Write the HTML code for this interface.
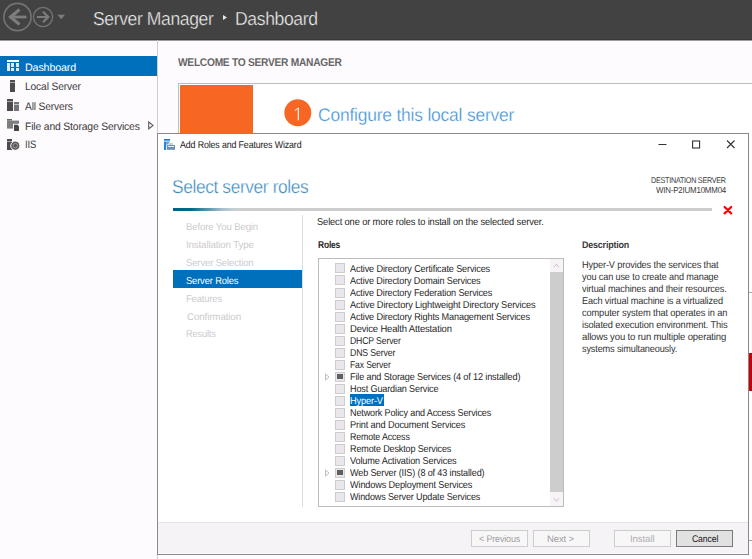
<!DOCTYPE html>
<html><head><meta charset="utf-8">
<style>
*{margin:0;padding:0;box-sizing:border-box}
html,body{width:752px;height:559px;overflow:hidden;background:#fefbfe;font-family:"Liberation Sans",sans-serif;position:relative}
.a{position:absolute}
.t{position:absolute;white-space:nowrap}
.cb{position:absolute;left:335px;width:10px;height:10px;background:#e9e7e9;border:1px solid #cfcccf}
.btn{position:absolute;top:530px;height:17px;border:1px solid #cfcccf;background:#f8f7f8}
</style></head><body>
<div class="a" style="left:0;top:0;width:752px;height:40px;background:#424242"></div>
<div class="a" style="left:0;top:39px;width:752px;height:1px;background:#383838"></div>
<div class="a" style="left:0;top:40px;width:752px;height:1px;background:#9c9b9c"></div>
<svg class="a" style="left:0;top:0" width="80" height="40">
  <circle cx="17.5" cy="17" r="13.6" fill="none" stroke="#747474" stroke-width="1.6"/>
  <path d="M10 17 H26.5" fill="none" stroke="#7c7c7c" stroke-width="2.8"/>
  <path d="M19.5 9.6 L10.6 17 L19.5 24.4" fill="none" stroke="#7c7c7c" stroke-width="3.2"/>
  <circle cx="43" cy="17" r="9.6" fill="none" stroke="#747474" stroke-width="1.4"/>
  <path d="M36.8 17 H48" fill="none" stroke="#7c7c7c" stroke-width="2"/>
  <path d="M43 11.8 L48.3 17 L43 22.2" fill="none" stroke="#7c7c7c" stroke-width="2.2"/>
  <path d="M57.5 14.8 H65 L61.25 19.2 Z" fill="#7c7c7c"/>
</svg>
<svg class="a" style="left:222px;top:14px" width="6" height="7"><path d="M1 1 L5 3.5 L1 6 Z" fill="#e8e8e8"/></svg>

<!-- sidebar -->
<div class="a" style="left:157px;top:40px;width:1px;height:519px;background:#d0cdd0"></div>
<div class="a" style="left:0;top:56px;width:157px;height:20px;background:#0070bd"></div>
<svg class="a" style="left:0;top:56px" width="24" height="100">
  <rect x="7" y="4" width="12" height="2" fill="#fff"/>
  <rect x="7" y="7" width="3" height="8" fill="#dfeaf6"/>
  <rect x="11" y="7" width="3" height="4" fill="#dfeaf6"/><rect x="16" y="7" width="3" height="4" fill="#dfeaf6"/>
  <rect x="11" y="12" width="3" height="3" fill="#dfeaf6"/><rect x="16" y="12" width="3" height="3" fill="#dfeaf6"/>
  <rect x="10" y="24" width="5" height="12" fill="#4c4c4c"/><rect x="10" y="26" width="5" height="1" fill="#a8a8a8"/>
  <rect x="7" y="43" width="6" height="12" fill="#4c4c4c"/><rect x="7" y="45" width="6" height="1" fill="#a8a8a8"/>
  <rect x="14" y="46" width="5" height="9" fill="#747474"/><rect x="14" y="48" width="5" height="1" fill="#bdbdbd"/>
  <rect x="7" y="63" width="5" height="1.6" fill="#666"/>
  <rect x="7" y="64.6" width="12" height="8" fill="#7e7e7e"/>
  <rect x="13" y="67.8" width="7" height="8" fill="#fefbfe"/>
  <path d="M14 68.8 H17.6 L19 70.2 V75 H14 Z" fill="#454545"/>
  <rect x="7" y="83" width="5" height="11" fill="#4c4c4c"/><rect x="7" y="85" width="5" height="1" fill="#a8a8a8"/>
  <circle cx="15.3" cy="89.7" r="4.6" fill="#5a5a5a" stroke="#fefbfe" stroke-width="1"/>
  <circle cx="15.3" cy="89.7" r="2.3" fill="none" stroke="#9a9a9a" stroke-width="1"/>
</svg>
<svg class="a" style="left:147px;top:120px" width="8" height="10"><path d="M1.7 2 L6 5.4 L1.7 8.8 Z" fill="none" stroke="#5a5a5a" stroke-width="1.1"/></svg>

<!-- main welcome -->
<div class="a" style="left:178px;top:83px;width:600px;height:500px;background:#fff;border:1px solid #bdbdbd"></div>
<div class="a" style="left:180px;top:85px;width:73px;height:60px;background:#f76622"></div>
<svg class="a" style="left:280px;top:95px" width="36" height="36"><circle cx="17.8" cy="17.7" r="13.5" fill="#f76622"/></svg>
<svg class="a" style="left:290px;top:104px" width="14" height="20"><path d="M8.3 3.8 V16.3" stroke="#fff" stroke-width="1.1"/><path d="M4.8 6.6 L8.3 4" stroke="#fff" stroke-width="1"/></svg>
<div class="a" style="left:749px;top:292px;width:3px;height:1px;background:#a6a6a6"></div>
<div class="a" style="left:749px;top:293px;width:3px;height:60px;background:#fefbfe"></div>
<div class="a" style="left:749px;top:391px;width:3px;height:149px;background:#fff"></div>
<div class="a" style="left:749px;top:353px;width:3px;height:38px;background:#c8000a"></div>
<div class="a" style="left:749px;top:540px;width:3px;height:1px;background:#a0a0a0"></div>
<div class="a" style="left:749px;top:541px;width:3px;height:18px;background:#fefbfe"></div>
<div class="a" style="left:158px;top:555px;width:591px;height:4px;background:#fefcfe"></div>

<!-- dialog -->
<div class="a" style="left:157px;top:133px;width:592px;height:422px;background:#fff;border:1px solid #8a8a8a"></div>
<svg class="a" style="left:160px;top:135px" width="20" height="20">
  <rect x="4" y="4" width="6" height="1.7" fill="#1b7ad6"/>
  <rect x="4" y="6.6" width="2.2" height="8.4" fill="#2384e0"/>
  <path d="M6.2 6.6 H10 L8 9.5 H6.2 Z" fill="#5aa2e6"/>
  <path d="M8.7 8 H13 V10 H8.7 Z" fill="#c8d2dc"/>
  <rect x="7" y="10" width="8" height="4.8" fill="#6f90b0"/>
  <rect x="8" y="11" width="6" height="1" fill="#e8eef4"/>
</svg>
<svg class="a" style="left:655px;top:136px" width="85" height="18">
  <path d="M3.5 8.5 H11.5" stroke="#333" stroke-width="1"/>
  <rect x="37.6" y="5" width="7" height="7" fill="none" stroke="#333" stroke-width="1.1"/>
  <path d="M72 4.5 L79.5 12 M79.5 4.5 L72 12" stroke="#333" stroke-width="1.1"/>
</svg>
<div class="a" style="left:173px;top:208px;width:539px;height:3px;background:linear-gradient(to right,#036089 0px,#046690 18px,#5f9ab1 36px,#a9c2cc 50px,#c8d0d3 62px,#cdcdcd 72px,#cdcdcd 100%)"></div>
<svg class="a" style="left:722px;top:205px" width="12" height="11"><path d="M2.6 2 L9.2 8.4 M9.2 2 L2.6 8.4" stroke="#ff0000" stroke-width="2.2" stroke-linecap="round"/></svg>

<div class="a" style="left:302px;top:215px;width:1px;height:292px;background:#dcdcdc"></div>
<div class="a" style="left:173px;top:270px;width:129px;height:18px;background:#0070bd"></div>

<!-- listbox -->
<div class="a" style="left:318px;top:258px;width:246px;height:249px;border:1px solid #bcbcbc;background:#fff"></div>
<div class="a" style="left:550px;top:259px;width:13px;height:247px;background:#f7f3f7"></div>
<div class="a" style="left:550px;top:272px;width:13px;height:220px;background:#cdcdcd"></div>
<svg class="a" style="left:550px;top:259px" width="13" height="247">
  <path d="M4 8.3 L6.5 5.2 L9 8.3" fill="none" stroke="#c4c4c4" stroke-width="1"/>
  <path d="M4 239.2 L6.5 242.3 L9 239.2" fill="none" stroke="#c4c4c4" stroke-width="1"/>
</svg>
<div class="cb" style="top:263.40px"></div>
<div class="cb" style="top:275.45px"></div>
<div class="cb" style="top:287.50px"></div>
<div class="cb" style="top:299.55px"></div>
<div class="cb" style="top:311.60px"></div>
<div class="cb" style="top:323.65px"></div>
<div class="cb" style="top:335.70px"></div>
<div class="cb" style="top:347.75px"></div>
<div class="cb" style="top:359.80px"></div>
<div class="cb" style="top:371.85px"></div>
<div class="a" style="left:337px;top:373.85px;width:6px;height:5px;background:#5f5f5f"></div>
<svg class="a" style="left:324px;top:372.85px" width="7" height="8"><path d="M1.5 1 L5 4 L1.5 7 Z" fill="none" stroke="#bdbdbd" stroke-width="1"/></svg>
<div class="cb" style="top:383.90px"></div>
<div class="cb" style="top:395.95px"></div>
<div class="a" style="left:350px;top:394.4px;width:34px;height:12px;background:#0070bd"></div>
<div class="cb" style="top:408.00px"></div>
<div class="cb" style="top:420.05px"></div>
<div class="cb" style="top:432.10px"></div>
<div class="cb" style="top:444.15px"></div>
<div class="cb" style="top:456.20px"></div>
<div class="cb" style="top:468.25px"></div>
<div class="a" style="left:337px;top:470.25px;width:6px;height:5px;background:#5f5f5f"></div>
<svg class="a" style="left:324px;top:469.25px" width="7" height="8"><path d="M1.5 1 L5 4 L1.5 7 Z" fill="none" stroke="#bdbdbd" stroke-width="1"/></svg>
<div class="cb" style="top:480.30px"></div>
<div class="cb" style="top:492.35px"></div>

<!-- footer -->
<div class="a" style="left:158px;top:522px;width:590px;height:32px;background:#f6f3f6;border-top:1px solid #e6e3e6;border-bottom:1px solid #fdfbfd"></div>
<div class="btn" style="left:471px;width:57px"></div>
<div class="btn" style="left:533px;width:57px"></div>
<div class="btn" style="left:614px;width:57px"></div>
<div class="btn" style="left:676px;width:57px;background:#e1e1e1;border-color:#7a7a7a"></div>
<div class="t" style="left:92.5px;top:10px;font-size:18.8px;line-height:18.8px;letter-spacing:-0.4px;color:#f4f4f4;text-rendering:geometricPrecision;-webkit-text-stroke:0.35px #424242;transform:scaleX(0.9326);transform-origin:0 0">Server Manager</div>
<div class="t" style="left:235.2px;top:10px;font-size:18.8px;line-height:18.8px;letter-spacing:-0.4px;color:#f4f4f4;text-rendering:geometricPrecision;-webkit-text-stroke:0.35px #424242;transform:scaleX(0.9356);transform-origin:0 0">Dashboard</div>
<div class="t" style="left:24.9px;top:63px;font-size:10.8px;line-height:10.8px;letter-spacing:-0.15px;color:#ffffff;text-rendering:geometricPrecision;transform:scaleX(0.992);transform-origin:0 0">Dashboard</div>
<div class="t" style="left:24.9px;top:82px;font-size:10.8px;line-height:10.8px;letter-spacing:-0.15px;color:#3a3a3a;text-rendering:geometricPrecision;transform:scaleX(0.9483);transform-origin:0 0">Local Server</div>
<div class="t" style="left:24.9px;top:102px;font-size:10.8px;line-height:10.8px;letter-spacing:-0.15px;color:#3a3a3a;text-rendering:geometricPrecision;transform:scaleX(0.946);transform-origin:0 0">All Servers</div>
<div class="t" style="left:24.9px;top:122px;font-size:10.8px;line-height:10.8px;letter-spacing:-0.15px;color:#3a3a3a;text-rendering:geometricPrecision;transform:scaleX(0.9571);transform-origin:0 0">File and Storage Services</div>
<div class="t" style="left:24.8px;top:140px;font-size:10.8px;line-height:10.8px;letter-spacing:-0.15px;color:#3a3a3a;text-rendering:geometricPrecision;transform:scaleX(0.8667);transform-origin:0 0">IIS</div>
<div class="t" style="left:178.4px;top:58px;font-size:11.2px;line-height:11.2px;letter-spacing:-0.3px;font-weight:bold;color:#666666;text-rendering:geometricPrecision;transform:scaleX(0.9128);transform-origin:0 0">WELCOME TO SERVER MANAGER</div>
<div class="t" style="left:318.4px;top:106px;font-size:18.2px;line-height:18.2px;letter-spacing:-0.2px;color:#3d90d4;text-rendering:geometricPrecision;-webkit-text-stroke:0.3px #ffffff;transform:scaleX(0.9576);transform-origin:0 0">Configure this local server</div>
<div class="t" style="left:180px;top:141px;font-size:10px;line-height:10px;letter-spacing:-0.15px;color:#1a1a1a;text-rendering:geometricPrecision;transform:scaleX(0.8839);transform-origin:0 0">Add Roles and Features Wizard</div>
<div class="t" style="left:171.5px;top:178px;font-size:18.6px;line-height:18.6px;letter-spacing:-0.4px;color:#3d8bbd;text-rendering:geometricPrecision;-webkit-text-stroke:0.3px #ffffff;transform:scaleX(0.9317);transform-origin:0 0">Select server roles</div>
<div class="t" style="left:650.9px;top:176px;font-size:8.3px;line-height:8.3px;letter-spacing:-0.3px;color:#3a3a3a;text-rendering:geometricPrecision;transform:scaleX(0.8694);transform-origin:0 0">DESTINATION SERVER</div>
<div class="t" style="left:656px;top:186px;font-size:8.6px;line-height:8.6px;letter-spacing:-0.2px;color:#3a3a3a;text-rendering:geometricPrecision;transform:scaleX(0.9184);transform-origin:0 0">WIN-P2IUM10MM04</div>
<div class="t" style="left:186.3px;top:223px;font-size:10px;line-height:10px;letter-spacing:-0.15px;color:#cdcacd;text-rendering:geometricPrecision;transform:scaleX(0.9622);transform-origin:0 0">Before You Begin</div>
<div class="t" style="left:186.3px;top:241px;font-size:10px;line-height:10px;letter-spacing:-0.15px;color:#cdcacd;text-rendering:geometricPrecision;transform:scaleX(0.9735);transform-origin:0 0">Installation Type</div>
<div class="t" style="left:186.3px;top:259px;font-size:10px;line-height:10px;letter-spacing:-0.15px;color:#cdcacd;text-rendering:geometricPrecision;transform:scaleX(0.9514);transform-origin:0 0">Server Selection</div>
<div class="t" style="left:186.3px;top:277px;font-size:10px;line-height:10px;letter-spacing:-0.15px;color:#ffffff;text-rendering:geometricPrecision;transform:scaleX(0.9345);transform-origin:0 0">Server Roles</div>
<div class="t" style="left:186.3px;top:295px;font-size:10px;line-height:10px;letter-spacing:-0.15px;color:#cdcacd;text-rendering:geometricPrecision;transform:scaleX(0.9405);transform-origin:0 0">Features</div>
<div class="t" style="left:187.3px;top:313px;font-size:10px;line-height:10px;letter-spacing:-0.15px;color:#cdcacd;text-rendering:geometricPrecision;transform:scaleX(0.9836);transform-origin:0 0">Confirmation</div>
<div class="t" style="left:186.3px;top:330px;font-size:10px;line-height:10px;letter-spacing:-0.15px;color:#cdcacd;text-rendering:geometricPrecision;transform:scaleX(0.9194);transform-origin:0 0">Results</div>
<div class="t" style="left:317.2px;top:218px;font-size:10px;line-height:10px;letter-spacing:-0.15px;color:#262626;text-rendering:geometricPrecision;transform:scaleX(0.9328);transform-origin:0 0">Select one or more roles to install on the selected server.</div>
<div class="t" style="left:317.8px;top:241px;font-size:10px;line-height:10px;letter-spacing:-0.2px;font-weight:bold;color:#262626;text-rendering:geometricPrecision;transform:scaleX(0.844);transform-origin:0 0">Roles</div>
<div class="t" style="left:349.8px;top:265px;font-size:10px;line-height:10px;letter-spacing:-0.15px;color:#262626;text-rendering:geometricPrecision;transform:scaleX(0.9131);transform-origin:0 0">Active Directory Certificate Services</div>
<div class="t" style="left:349.8px;top:277px;font-size:10px;line-height:10px;letter-spacing:-0.15px;color:#262626;text-rendering:geometricPrecision;transform:scaleX(0.909);transform-origin:0 0">Active Directory Domain Services</div>
<div class="t" style="left:349.8px;top:289px;font-size:10px;line-height:10px;letter-spacing:-0.15px;color:#262626;text-rendering:geometricPrecision;transform:scaleX(0.9096);transform-origin:0 0">Active Directory Federation Services</div>
<div class="t" style="left:349.8px;top:301px;font-size:10px;line-height:10px;letter-spacing:-0.15px;color:#262626;text-rendering:geometricPrecision;transform:scaleX(0.9265);transform-origin:0 0">Active Directory Lightweight Directory Services</div>
<div class="t" style="left:349.8px;top:313px;font-size:10px;line-height:10px;letter-spacing:-0.15px;color:#262626;text-rendering:geometricPrecision;transform:scaleX(0.9132);transform-origin:0 0">Active Directory Rights Management Services</div>
<div class="t" style="left:349.8px;top:325px;font-size:10px;line-height:10px;letter-spacing:-0.15px;color:#262626;text-rendering:geometricPrecision;transform:scaleX(0.943);transform-origin:0 0">Device Health Attestation</div>
<div class="t" style="left:349.8px;top:337px;font-size:10px;line-height:10px;letter-spacing:-0.15px;color:#262626;text-rendering:geometricPrecision;transform:scaleX(0.8638);transform-origin:0 0">DHCP Server</div>
<div class="t" style="left:349.8px;top:349px;font-size:10px;line-height:10px;letter-spacing:-0.15px;color:#262626;text-rendering:geometricPrecision;transform:scaleX(0.8725);transform-origin:0 0">DNS Server</div>
<div class="t" style="left:349.8px;top:361px;font-size:10px;line-height:10px;letter-spacing:-0.15px;color:#262626;text-rendering:geometricPrecision;transform:scaleX(0.8565);transform-origin:0 0">Fax Server</div>
<div class="t" style="left:349.8px;top:373px;font-size:10px;line-height:10px;letter-spacing:-0.15px;color:#262626;text-rendering:geometricPrecision;transform:scaleX(0.9097);transform-origin:0 0">File and Storage Services (4 of 12 installed)</div>
<div class="t" style="left:349.8px;top:385px;font-size:10px;line-height:10px;letter-spacing:-0.15px;color:#262626;text-rendering:geometricPrecision;transform:scaleX(0.9073);transform-origin:0 0">Host Guardian Service</div>
<div class="t" style="left:349.8px;top:397px;font-size:10px;line-height:10px;letter-spacing:-0.15px;color:#ffffff;text-rendering:geometricPrecision;transform:scaleX(0.9229);transform-origin:0 0">Hyper-V</div>
<div class="t" style="left:349.8px;top:409px;font-size:10px;line-height:10px;letter-spacing:-0.15px;color:#262626;text-rendering:geometricPrecision;transform:scaleX(0.9039);transform-origin:0 0">Network Policy and Access Services</div>
<div class="t" style="left:349.8px;top:421px;font-size:10px;line-height:10px;letter-spacing:-0.15px;color:#262626;text-rendering:geometricPrecision;transform:scaleX(0.9185);transform-origin:0 0">Print and Document Services</div>
<div class="t" style="left:349.8px;top:433px;font-size:10px;line-height:10px;letter-spacing:-0.15px;color:#262626;text-rendering:geometricPrecision;transform:scaleX(0.8836);transform-origin:0 0">Remote Access</div>
<div class="t" style="left:349.8px;top:445px;font-size:10px;line-height:10px;letter-spacing:-0.15px;color:#262626;text-rendering:geometricPrecision;transform:scaleX(0.9018);transform-origin:0 0">Remote Desktop Services</div>
<div class="t" style="left:349.8px;top:457px;font-size:10px;line-height:10px;letter-spacing:-0.15px;color:#262626;text-rendering:geometricPrecision;transform:scaleX(0.9172);transform-origin:0 0">Volume Activation Services</div>
<div class="t" style="left:349.8px;top:469px;font-size:10px;line-height:10px;letter-spacing:-0.15px;color:#262626;text-rendering:geometricPrecision;transform:scaleX(0.9061);transform-origin:0 0">Web Server (IIS) (8 of 43 installed)</div>
<div class="t" style="left:349.8px;top:481px;font-size:10px;line-height:10px;letter-spacing:-0.15px;color:#262626;text-rendering:geometricPrecision;transform:scaleX(0.9134);transform-origin:0 0">Windows Deployment Services</div>
<div class="t" style="left:349.8px;top:493px;font-size:10px;line-height:10px;letter-spacing:-0.15px;color:#262626;text-rendering:geometricPrecision;transform:scaleX(0.9014);transform-origin:0 0">Windows Server Update Services</div>
<div class="t" style="left:581.9px;top:241px;font-size:9.6px;line-height:9.6px;letter-spacing:-0.2px;font-weight:bold;color:#3a3a3a;text-rendering:geometricPrecision;transform:scaleX(0.9306);transform-origin:0 0">Description</div>
<div class="t" style="left:581.9px;top:261px;font-size:10px;line-height:10px;letter-spacing:-0.15px;color:#333333;text-rendering:geometricPrecision;transform:scaleX(0.9231);transform-origin:0 0">Hyper-V provides the services that</div>
<div class="t" style="left:581.9px;top:273px;font-size:10px;line-height:10px;letter-spacing:-0.15px;color:#333333;text-rendering:geometricPrecision;transform:scaleX(0.9148);transform-origin:0 0">you can use to create and manage</div>
<div class="t" style="left:581.9px;top:285px;font-size:10px;line-height:10px;letter-spacing:-0.15px;color:#333333;text-rendering:geometricPrecision;transform:scaleX(0.9159);transform-origin:0 0">virtual machines and their resources.</div>
<div class="t" style="left:581.9px;top:297px;font-size:10px;line-height:10px;letter-spacing:-0.15px;color:#333333;text-rendering:geometricPrecision;transform:scaleX(0.9184);transform-origin:0 0">Each virtual machine is a virtualized</div>
<div class="t" style="left:581.9px;top:309px;font-size:10px;line-height:10px;letter-spacing:-0.15px;color:#333333;text-rendering:geometricPrecision;transform:scaleX(0.9276);transform-origin:0 0">computer system that operates in an</div>
<div class="t" style="left:581.9px;top:321px;font-size:10px;line-height:10px;letter-spacing:-0.15px;color:#333333;text-rendering:geometricPrecision;transform:scaleX(0.9276);transform-origin:0 0">isolated execution environment. This</div>
<div class="t" style="left:581.9px;top:333px;font-size:10px;line-height:10px;letter-spacing:-0.15px;color:#333333;text-rendering:geometricPrecision;transform:scaleX(0.9523);transform-origin:0 0">allows you to run multiple operating</div>
<div class="t" style="left:581.9px;top:345px;font-size:10px;line-height:10px;letter-spacing:-0.15px;color:#333333;text-rendering:geometricPrecision;transform:scaleX(0.9126);transform-origin:0 0">systems simultaneously.</div>
<div class="t" style="left:479.2px;top:535px;font-size:9.6px;line-height:9.6px;letter-spacing:-0.15px;color:#a09da0;text-rendering:geometricPrecision;transform:scaleX(0.9318);transform-origin:0 0">&lt; Previous</div>
<div class="t" style="left:547.4px;top:535px;font-size:9.6px;line-height:9.6px;letter-spacing:-0.15px;color:#a09da0;text-rendering:geometricPrecision;transform:scaleX(0.9962);transform-origin:0 0">Next &gt;</div>
<div class="t" style="left:629.7px;top:535px;font-size:9.6px;line-height:9.6px;letter-spacing:-0.15px;color:#b0adb0;text-rendering:geometricPrecision;transform:scaleX(1.0174);transform-origin:0 0">Install</div>
<div class="t" style="left:691.8px;top:535px;font-size:9.6px;line-height:9.6px;letter-spacing:-0.15px;color:#1a1a1a;text-rendering:geometricPrecision;transform:scaleX(0.9034);transform-origin:0 0">Cancel</div>
</body></html>
